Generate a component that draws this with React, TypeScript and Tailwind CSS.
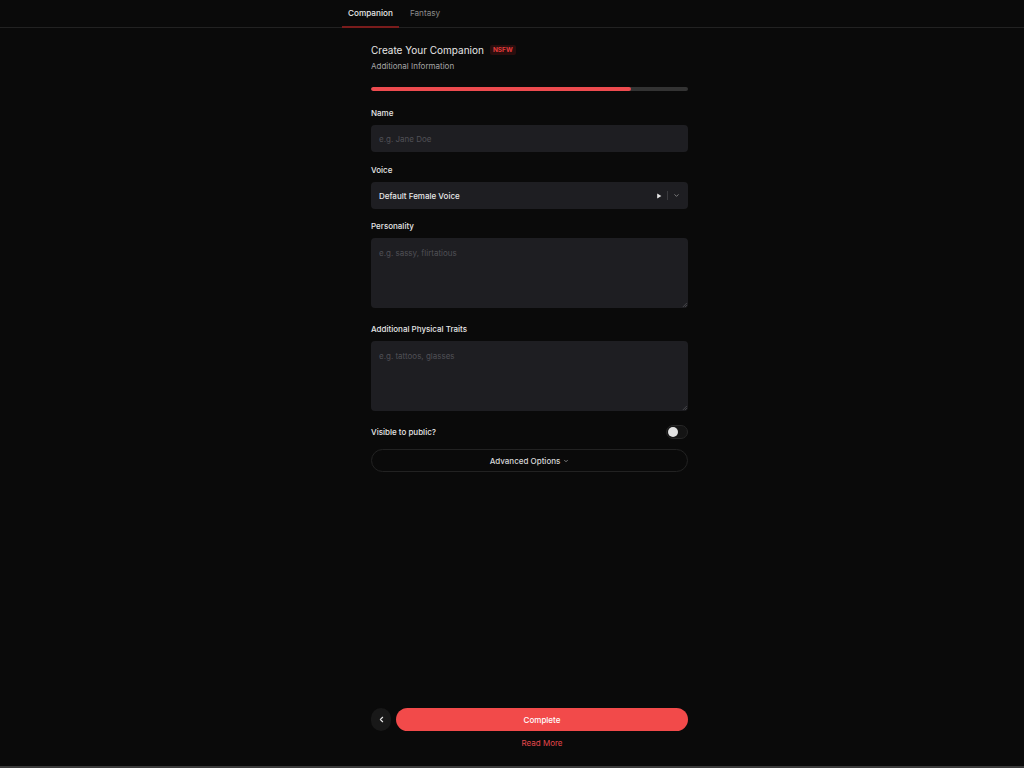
import React from "react";

function ChevronDown({ className = "" }: { className?: string }) {
  return (
    <svg viewBox="0 0 24 24" className={className} fill="none" stroke="currentColor" strokeWidth={2.5} strokeLinecap="round" strokeLinejoin="round">
      <path d="M6 9l6 6 6-6" />
    </svg>
  );
}

function ResizeHandle() {
  return (
    <svg viewBox="0 0 6 6" className="absolute right-[1px] bottom-[1px] w-[5px] h-[5px] text-[#5a5a5e]" fill="none" stroke="currentColor" strokeWidth={0.8}>
      <path d="M1 6L6 1M3.5 6L6 3.5" />
    </svg>
  );
}

export default function App() {
  return (
    <div className="h-[768px] w-full bg-[#0a0a0a] flex flex-col border-b-2 border-[#3b3b3b] overflow-hidden" style={{ fontFamily: "Inter, 'Noto Sans', sans-serif" }}>
      {/* Tabs */}
      <div className="h-[28px] shrink-0 border-b border-[#222] flex items-stretch pl-[342px]">
        <div className="relative flex items-center px-[6px] text-[8.2px] font-medium text-[#e8e8e8]">
          Companion
          <div className="absolute left-0 right-0 bottom-[-1px] h-[2px] bg-[#7a1c1c]" />
        </div>
        <div className="flex items-center ml-[5px] px-[6px] text-[8.2px] text-[#8a8a8a]">Fantasy</div>
      </div>

      {/* Main */}
      <div className="flex-1 flex flex-col ml-[371px] w-[317px]">
        <div className="mt-[15px] flex items-center h-[14px]">
          <span className="text-[10px] text-[#e6e6e6]">Create Your Companion</span>
          <span className="ml-[6px] px-[3px] rounded-[2px] bg-[#2a0e0e] text-[#e23b3b] text-[6.5px] font-bold leading-[10px]">NSFW</span>
        </div>
        <div className="mt-[3px] text-[8px] leading-[12px] text-[#a6a6a6]">Additional Information</div>

        <div className="mt-[15px] h-[4px] rounded-full bg-[#333] overflow-hidden">
          <div className="h-full w-[82%] bg-[#ee4b4f] rounded-full" />
        </div>

        <div className="mt-[16px] text-[8px] leading-[12px] font-medium text-[#e6e6e6]">Name</div>
        <div className="mt-[6px] h-[27px] rounded-[4px] bg-[#1e1e22] flex items-center px-[8px] text-[8px] text-[#505056]">e.g. Jane Doe</div>

        <div className="mt-[12px] text-[8px] leading-[12px] font-medium text-[#e6e6e6]">Voice</div>
        <div className="mt-[6px] h-[27px] rounded-[4px] bg-[#1e1e22] flex items-center px-[8px]">
          <span className="text-[8px] font-medium text-[#e8e8e8]">Default Female Voice</span>
          <div className="ml-auto flex items-center">
            <svg viewBox="0 0 10 10" className="w-[6px] h-[6px] text-[#e8e8e8]" fill="currentColor">
              <path d="M2 1l7 4-7 4z" />
            </svg>
            <div className="mx-[5px] w-px h-[9px] bg-[#3a3a3e]" />
            <ChevronDown className="w-[7px] h-[7px] text-[#9a9a9a]" />
          </div>
        </div>

        <div className="mt-[11px] text-[8px] leading-[12px] font-medium text-[#e6e6e6]">Personality</div>
        <div className="mt-[6px] h-[70px] rounded-[4px] bg-[#1e1e22] px-[8px] pt-[9px] text-[8px] text-[#505056] relative">
          e.g. sassy, flirtatious
          <ResizeHandle />
        </div>

        <div className="mt-[15px] text-[8px] leading-[12px] font-medium text-[#e6e6e6]">Additional Physical Traits</div>
        <div className="mt-[6px] h-[70px] rounded-[4px] bg-[#1e1e22] px-[8px] pt-[9px] text-[8px] text-[#505056] relative">
          e.g. tattoos, glasses
          <ResizeHandle />
        </div>

        <div className="mt-[14px] h-[14px] flex items-center justify-between">
          <span className="text-[8px] font-medium text-[#e6e6e6]">Visible to public?</span>
          <div className="w-[22px] h-[14px] rounded-full bg-[#141414] border border-[#262626] flex items-center px-[1px]">
            <div className="w-[10px] h-[10px] rounded-full bg-[#e2e2e2]" />
          </div>
        </div>

        <div className="mt-[10px] h-[23px] rounded-full border border-[#222] flex items-center justify-center gap-[3px]">
          <span className="text-[8px] font-medium text-[#d8d8d8]">Advanced Options</span>
          <ChevronDown className="w-[6px] h-[6px] text-[#bbb]" />
        </div>

        <div className="mt-auto flex items-center gap-[5px]">
          <div className="w-[20px] h-[23px] rounded-full bg-[#181818] flex items-center justify-center">
            <svg viewBox="0 0 24 24" className="w-[9px] h-[9px] text-[#e8e8e8]" fill="none" stroke="currentColor" strokeWidth={3} strokeLinecap="round" strokeLinejoin="round">
              <path d="M15 6l-6 6 6 6" />
            </svg>
          </div>
          <div className="flex-1 h-[23px] rounded-full bg-[#f24a4a] flex items-center justify-center text-[8px] font-medium text-white">Complete</div>
        </div>
        <div className="mt-[6px] mb-[17px] pl-[25px] text-center text-[8px] leading-[12px] text-[#e2474b]">Read More</div>
      </div>
    </div>
  );
}
